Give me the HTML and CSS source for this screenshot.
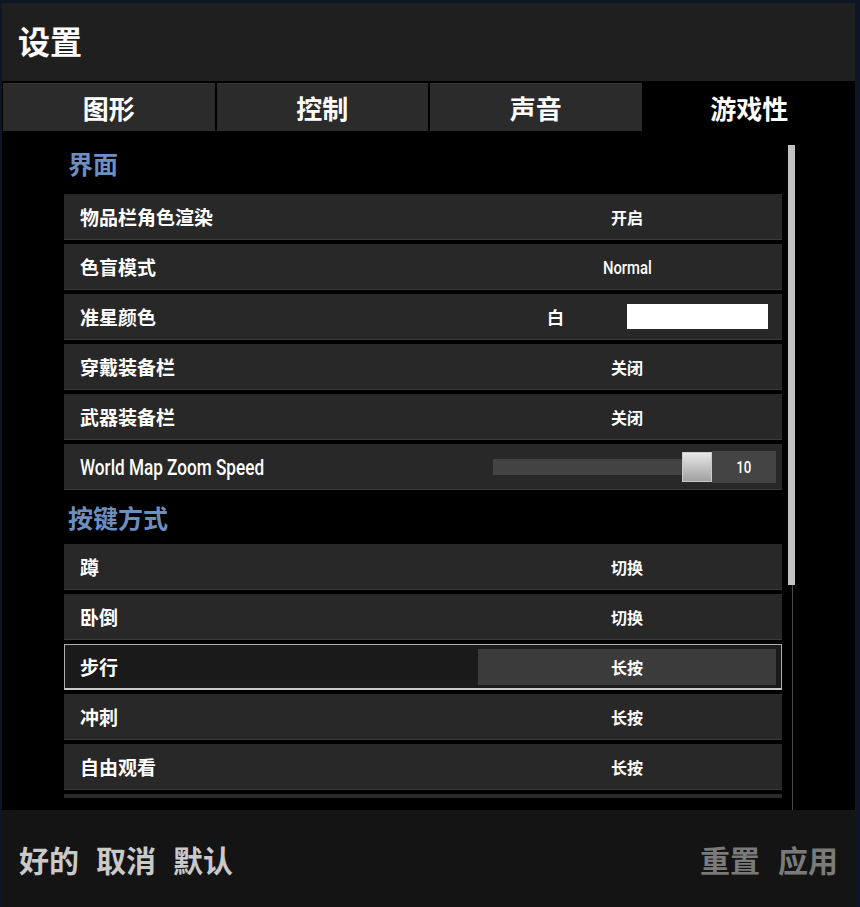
FILE: index.html
```html
<!DOCTYPE html>
<html lang="zh">
<head>
<meta charset="utf-8">
<title>设置</title>
<link rel="stylesheet" href="styles.css">
</head>
<body>
<div class="window">
  <div class="header"><h1 class="title">设置</h1></div>
  <div class="tabs">
    <div class="tab">图形</div>
    <div class="tab">控制</div>
    <div class="tab">声音</div>
    <div class="tab active">游戏性</div>
  </div>
  <div class="content">
    <div class="list">
      <div class="section">界面</div>
      <div class="row"><span class="label">物品栏角色渲染</span><span class="value">开启</span></div>
      <div class="row"><span class="label">色盲模式</span><span class="value"><span class="cond">Normal</span></span></div>
      <div class="row"><span class="label">准星颜色</span><span class="colorval"><span class="colorname">白</span><span class="swatch"></span></span></div>
      <div class="row"><span class="label">穿戴装备栏</span><span class="value">关闭</span></div>
      <div class="row"><span class="label">武器装备栏</span><span class="value">关闭</span></div>
      <div class="row"><span class="label"><span class="cond big">World Map Zoom Speed</span></span>
        <span class="slider"><span class="track"></span><span class="thumb"></span><span class="num"><span class="cond">10</span></span></span>
      </div>
      <div class="section sec2">按键方式</div>
      <div class="row"><span class="label">蹲</span><span class="value">切换</span></div>
      <div class="row"><span class="label">卧倒</span><span class="value">切换</span></div>
      <div class="row selected"><span class="label">步行</span><span class="value boxed">长按</span></div>
      <div class="row"><span class="label">冲刺</span><span class="value">长按</span></div>
      <div class="row"><span class="label">自由观看</span><span class="value">长按</span></div>
      <div class="row partial"></div>
    </div>
    <div class="scroll"><div class="thumbbar"></div></div>
  </div>
  <div class="footer">
    <div class="left"><span>好的</span><span>取消</span><span>默认</span></div>
    <div class="right"><span>重置</span><span>应用</span></div>
  </div>
</div>
</body>
</html>
```

FILE: styles.css
```css
html, body {
  margin: 0;
  padding: 0;
}
body {
  background: #0e1524;
  font-family: "Noto Sans CJK SC", "Noto Sans", sans-serif;
  color: #fff;
  width: 860px;
  height: 907px;
  overflow: hidden;
}
.window {
  margin: 3px 5px 0 2px;
  height: 904px;
  display: flex;
  flex-direction: column;
  background: #000;
}
.header {
  height: 78px;
  background: #1f1f1f;
  display: flex;
  align-items: center;
  padding-left: 16px;
}
.title {
  margin: 0;
  font-size: 32px;
  font-weight: 700;
  line-height: 1;
  position: relative;
  top: -2px;
}
.tabs {
  display: flex;
  gap: 2px;
  padding: 2px 0 0 1px;
  height: 48px;
  background: #000;
}
.tab {
  flex: 1;
  background: #2b2b2b;
  display: flex;
  align-items: center;
  justify-content: center;
  font-size: 26px;
  font-weight: 700;
  border-top: 1px solid #333;
}
.tab.active {
  background: #000;
  border-top-color: #000;
}
.content {
  flex: 1;
  display: flex;
  overflow: hidden;
  background: #000;
  padding-top: 14px;
}
.list {
  width: 718px;
  margin-left: 62px;
  display: flex;
  flex-direction: column;
  gap: 4px;
}
.section {
  color: #6d8fc0;
  font-size: 25px;
  font-weight: 700;
  height: 45px;
  line-height: 36px;
  padding-left: 4px;
}
.sec2 {
  margin-top: 2px;
  height: 44px;
  line-height: 42px;
}
.row {
  height: 45px;
  flex: 0 0 45px;
  background: #282828;
  border-bottom: 1px solid #3a3a3a;
  display: flex;
  align-items: center;
  box-sizing: content-box;
}
.label {
  flex: 1;
  padding-left: 16px;
  font-size: 19px;
  font-weight: 700;
}
.value {
  width: 298px;
  margin-right: 6px;
  text-align: center;
  font-size: 16px;
  font-weight: 700;
}
.cond {
  display: inline-block;
  font-family: "Roboto", "Noto Sans", sans-serif;
  font-weight: 500;
  font-size: 19px;
  transform: scaleX(0.78);
  transform-origin: center;
}
.cond.big {
  font-size: 22px;
  font-weight: 500;
  transform-origin: left center;
  white-space: nowrap;
}
.colorval {
  display: flex;
  align-items: center;
  margin-right: 14px;
}
.colorname {
  font-size: 17px;
  font-weight: 700;
  width: 80px;
}
.swatch {
  width: 141px;
  height: 25px;
  background: #fff;
}
.slider {
  display: flex;
  align-items: center;
  margin-right: 6px;
}
.track {
  width: 189px;
  height: 16px;
  background: #434343;
}
.thumb {
  width: 30px;
  height: 30px;
  background: linear-gradient(#e8e8e8, #a0a0a0);
  box-sizing: border-box;
  border: 1px solid #ccc;
}
.num {
  width: 64px;
  height: 32px;
  background: #444;
  display: flex;
  align-items: center;
  justify-content: center;
}
.num .cond {
  font-size: 17px;
}
.selected {
  background: #1a1a1a;
  border: 1px solid #b0b0b0;
  border-bottom: 2px solid #c8c8c8;
  height: 43px;
  flex-basis: 43px;
}
.selected .label {
  padding-left: 15px;
}
.boxed {
  background: #3b3b3b;
  height: 36px;
  line-height: 36px;
  margin-right: 5px;
}
.partial {
  height: 4px;
  flex: 0 0 4px;
  border-bottom: none;
  background: #2a2a2a;
}
.scroll {
  width: 8px;
  margin-left: 6px;
  position: relative;
  background: linear-gradient(to right, transparent 4px, #4a4a4a 4px, #4a4a4a 5px, transparent 5px);
}
.thumbbar {
  width: 7px;
  height: 440px;
  background: #c2c2c2;
}
.footer {
  height: 97px;
  background: #141414;
  display: flex;
  align-items: center;
  justify-content: space-between;
  padding: 0 17px 0 17px;
  font-size: 30px;
  font-weight: 700;
}
.left {
  display: flex;
  gap: 17px;
  color: #c9c9c9;
}
.right {
  display: flex;
  gap: 18px;
  color: #7a7a7a;
}
```
